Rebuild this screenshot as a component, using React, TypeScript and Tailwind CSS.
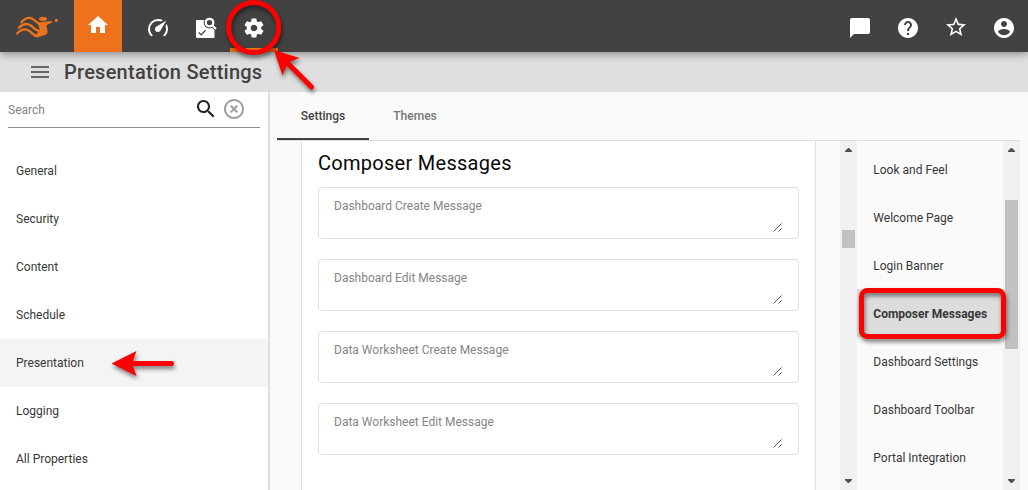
import React from "react";

function Icon({ d, className }: { d: string; className?: string }) {
  return (
    <svg viewBox="0 0 24 24" className={className ?? "size-6"} fill="currentColor" aria-hidden="true">
      <path d={d} />
    </svg>
  );
}

const icons = {
  home: "M10 20v-6h4v6h5v-8h3L12 3 2 12h3v8z",
  gauge:
    "M12,16A3,3 0 0,1 9,13C9,11.88 9.61,10.9 10.5,10.39L20.21,4.77L14.68,14.35C14.18,15.33 13.17,16 12,16M12,3C13.81,3 15.5,3.5 16.97,4.32L14.87,5.53C14,5.19 13,5 12,5A8,8 0 0,0 4,13C4,15.21 4.89,17.21 6.34,18.65H6.35C6.74,19.04 6.74,19.67 6.35,20.06C5.96,20.45 5.32,20.45 4.93,20.07V20.07C3.12,18.26 2,15.76 2,13A10,10 0 0,1 12,3M22,13C22,15.76 20.88,18.26 19.07,20.07V20.07C18.68,20.45 18.05,20.45 17.66,20.06C17.27,19.67 17.27,19.04 17.66,18.65V18.65C19.11,17.2 20,15.21 20,13C20,12 19.81,11 19.46,10.1L20.67,8C21.5,9.5 22,11.18 22,13Z",
  gear:
    "M19.14 12.94c.04-.3.06-.61.06-.94 0-.32-.02-.64-.07-.94l2.03-1.58c.18-.14.23-.41.12-.61l-1.92-3.32c-.12-.22-.37-.29-.59-.22l-2.39.96c-.5-.38-1.03-.7-1.62-.94l-.36-2.54c-.04-.24-.24-.41-.48-.41h-3.84c-.24 0-.43.17-.47.41l-.36 2.54c-.59.24-1.13.57-1.62.94l-2.39-.96c-.22-.08-.47 0-.59.22L2.74 8.87c-.12.21-.08.47.12.61l2.03 1.58c-.05.3-.09.63-.09.94s.02.64.07.94l-2.03 1.58c-.18.14-.23.41-.12.61l1.92 3.32c.12.22.37.29.59.22l2.39-.96c.5.38 1.03.7 1.62.94l.36 2.54c.05.24.24.41.48.41h3.84c.24 0 .44-.17.47-.41l.36-2.54c.59-.24 1.13-.56 1.62-.94l2.39.96c.22.08.47 0 .59-.22l1.92-3.32c.12-.22.07-.47-.12-.61l-2.01-1.58zM12 15.3c-1.82 0-3.3-1.48-3.3-3.3s1.48-3.3 3.3-3.3 3.3 1.48 3.3 3.3-1.48 3.3-3.3 3.3z",
  chat: "M20 2H4c-1.1 0-1.99.9-1.99 2L2 22l4-4h14c1.1 0 2-.9 2-2V4c0-1.1-.9-2-2-2z",
  help: "M12 2C6.48 2 2 6.48 2 12s4.48 10 10 10 10-4.48 10-10S17.52 2 12 2zm1 17h-2v-2h2v2zm2.07-7.75l-.9.92C13.45 12.9 13 13.5 13 15h-2v-.5c0-1.1.45-2.1 1.17-2.83l1.24-1.26c.37-.36.59-.86.59-1.41 0-1.1-.9-2-2-2s-2 .9-2 2H8c0-2.21 1.79-4 4-4s4 1.79 4 4c0 .88-.36 1.68-.93 2.25z",
  star: "M22 9.24l-7.19-.62L12 2 9.19 8.63 2 9.24l5.46 4.73L5.82 21 12 17.27 18.18 21l-1.63-7.03L22 9.24zM12 15.4l-3.76 2.27 1-4.28-3.32-2.88 4.38-.38L12 6.1l1.71 4.04 4.38.38-3.32 2.88 1 4.28L12 15.4z",
  account:
    "M12 2C6.48 2 2 6.48 2 12s4.48 10 10 10 10-4.48 10-10S17.52 2 12 2zm0 3c1.66 0 3 1.34 3 3s-1.34 3-3 3-3-1.34-3-3 1.34-3 3-3zm0 14.2c-2.5 0-4.71-1.28-6-3.22.03-1.99 4-3.08 6-3.08 1.99 0 5.97 1.09 6 3.08-1.29 1.94-3.5 3.22-6 3.22z",
  search:
    "M15.5 14h-.79l-.28-.27C15.41 12.59 16 11.11 16 9.5 16 5.91 13.09 3 9.5 3S3 5.91 3 9.5 5.91 16 9.5 16c1.61 0 3.09-.59 4.23-1.57l.27.28v.79l5 4.99L20.49 19l-4.99-5zm-6 0C7.01 14 5 11.99 5 9.5S7.01 5 9.5 5 14 7.01 14 9.5 11.99 14 9.5 14z",
  clear:
    "M12,20C7.59,20 4,16.41 4,12C4,7.59 7.59,4 12,4C16.41,4 20,7.59 20,12C20,16.41 16.41,20 12,20M12,2C6.47,2 2,6.47 2,12C2,17.53 6.47,22 12,22C17.53,22 22,17.53 22,12C22,6.47 17.53,2 12,2M14.59,8L12,10.59L9.41,8L8,9.41L10.59,12L8,14.59L9.41,16L12,13.41L14.59,16L16,14.59L13.41,12L16,9.41L14.59,8Z",
  menu: "M3 18h18v-2H3v2zm0-5h18v-2H3v2zm0-7v2h18V6H3z",
};

function Logo() {
  return (
    <svg viewBox="45 42 135 78" className="mt-[14px] ml-[15px] h-[26px] w-[45px]" fill="#ee711c" aria-hidden="true">
      <path d="M112 68L128 66L155 63C157 64 157 66 154 68L141 75C137 81 145 90 142 100C139 106 128 106 120 110C112 114 103 112 98 106L108 104L113 98L119 92L117 80Z" />
      <g fill="none" stroke="#ee711c" strokeLinecap="round" strokeWidth="7">
        <path d="M64 67C76 54 88 51 97 56C107 62 108 69 122 71" />
        <path d="M57 83C70 70 82 70 91 76C102 83 105 90 119 94" />
        <path d="M51 100C65 87 78 86 87 92C96 99 100 107 112 108" />
      </g>
      <ellipse cx="129" cy="56.500" rx="12" ry="6.500" />
      <circle cx="169" cy="61" r="5" />
    </svg>
  );
}

function AuditIcon() {
  return (
    <svg viewBox="0 0 24 24" className="size-6" fill="none" aria-hidden="true">
      <path d="M3 4h17.500v17a1 1 0 0 1-1 1H3a1 1 0 0 1-1-1V5a1 1 0 0 1 1-1z" fill="#fff" />
      <circle cx="15.500" cy="6.600" r="5.900" fill="#424242" />
      <path d="M17.500 8.500l5 5" stroke="#424242" strokeWidth="3.500" />
      <path d="M17 0h7v9l-3 2z" fill="#424242" />
      <circle cx="15.500" cy="6.600" r="3.800" stroke="#fff" strokeWidth="2.300" />
      <path d="M18 9l4 4" stroke="#fff" strokeWidth="2" />
      <path d="M4.800 16.500l2.400 2.400 4.300-4.600" stroke="#424242" strokeWidth="1.300" />
    </svg>
  );
}

function NavButton({ children, className = "" }: { children: React.ReactNode; className?: string }) {
  return <button className={`flex h-[52px] w-12 shrink-0 items-center justify-center pt-1 text-white ${className}`}>{children}</button>;
}

function TopBar() {
  return (
    <header className="relative z-10 flex h-[52px] shrink-0 bg-[#424242] shadow-[0_2px_8px_0px_rgba(0,0,0,0.38)]">
      <div className="w-[74px] shrink-0">
        <Logo />
      </div>
      <NavButton className="bg-[#ee711c] pb-1.5">
        <Icon d={icons.home} />
      </NavButton>
      <nav className="ml-3 flex flex-1">
        <NavButton><Icon d={icons.gauge} /></NavButton>
        <NavButton><AuditIcon /></NavButton>
        <NavButton className="border-b-4 border-[#ee711c] pt-2"><Icon d={icons.gear} /></NavButton>
      </nav>
      <div className="flex">
        <NavButton><Icon d={icons.chat} /></NavButton>
        <NavButton><Icon d={icons.help} /></NavButton>
        <NavButton className="pb-0.5"><Icon d={icons.star} /></NavButton>
        <NavButton><Icon d={icons.account} /></NavButton>
      </div>
    </header>
  );
}

const pages = ["General", "Security", "Content", "Schedule", "Presentation", "Logging", "All Properties"];
const fields = ["Dashboard Create Message", "Dashboard Edit Message", "Data Worksheet Create Message", "Data Worksheet Edit Message"];
const sections = ["Look and Feel", "Welcome Page", "Login Banner", "Composer Messages", "Dashboard Settings", "Dashboard Toolbar", "Portal Integration"];

function Sidebar() {
  return (
    <aside className="w-[270px] shrink-0 border-r-2 border-[#e0e0e0] bg-white">
      <div className="mx-2 flex h-9 items-center border-b border-[#8b8b8b] text-xs text-[#858585]">
        <span className="flex-1">Search</span>
        <Icon d={icons.search} className="mt-[-2px] mr-1 size-6 text-[#212121]" />
        <Icon d={icons.clear} className="mt-[-2px] mr-[14px] size-6 text-[#9e9e9e]" />
      </div>
      <ul className="mt-[19px]">
        {pages.map((page) => (
          <li key={page} className={`flex h-12 items-center pl-4 text-xs text-[#383838] ${page === "Presentation" ? "bg-[#f4f4f4]" : ""}`}>
            {page}
          </li>
        ))}
      </ul>
    </aside>
  );
}

function Scrollbar({ thumb }: { thumb: string }) {
  return (
    <div className="flex w-[17px] shrink-0 flex-col items-center bg-[#f1f1f1]">
      <svg viewBox="0 0 7 4" className="mt-[7px] h-1 w-[7px] shrink-0" fill="#505050" aria-hidden="true"><path d="M3 0h1l3 3v1H0V3z" /></svg>
      <div className={`w-[13px] shrink-0 bg-[#c1c1c1] ${thumb}`} />
      <svg viewBox="0 0 7 4" className="mt-auto mb-[7px] h-1 w-[7px] shrink-0" fill="#505050" aria-hidden="true"><path d="M0 0h7v1L4 4H3L0 1z" /></svg>
    </div>
  );
}

function MessageField({ label }: { label: string }) {
  return (
    <div className="flex h-[52px] justify-between rounded border border-[#e0e0e0] bg-white pt-[10px] pr-4 pl-[15px]">
      <span className="text-xs leading-4 text-[#858585]">{label}</span>
      <svg viewBox="0 0 9 9" className="mt-[25px] size-[9px]" stroke="#555" strokeWidth="1" fill="none" aria-hidden="true">
        <path d="M.5 8.5l8-8M5.5 8.5l3-3" />
      </svg>
    </div>
  );
}

function Annotations() {
  return (
    <svg viewBox="0 0 1028 490" className="pointer-events-none absolute inset-0 z-20 h-[490px] w-[1028px] drop-shadow-[1px_3px_2px_rgba(0,0,0,0.5)]" fill="none" aria-hidden="true">
      <circle cx="253.7" cy="27.5" r="25" stroke="#fe0000" strokeWidth="5" />
      <path d="M311.5 87L286 61.5" stroke="#fe0000" strokeWidth="5" strokeLinecap="round" />
      <path d="M274 50L299.500 58L288 62.500L282.500 75.500Z" fill="#fe0000" />
      <path d="M171.500 363.500H134" stroke="#fe0000" strokeWidth="5" strokeLinecap="round" />
      <path d="M111.500 363.500L136.500 351L132 363.500L136.500 376Z" fill="#fe0000" />
      <rect x="861.500" y="290.500" width="142" height="46" rx="6" stroke="#fe0000" strokeWidth="5" />
    </svg>
  );
}

export default function App() {
  return (
    <div className="relative flex h-[490px] w-[1028px] flex-col overflow-hidden bg-[#fafafa] font-['Roboto',sans-serif]">
      <TopBar />
      <div className="flex h-10 shrink-0 items-center bg-[#dfdfdf] pl-7 text-[#424242]">
        <Icon d={icons.menu} className="size-6 text-[#666]" />
        <h1 className="ml-3 text-xl font-medium tracking-[0.25px]">Presentation Settings</h1>
      </div>
      <div className="flex min-h-0 flex-1">
        <Sidebar />
        <main className="mr-2 ml-[7px] flex min-w-0 flex-1 flex-col">
          <div className="flex h-[49px] shrink-0 border-b border-[#dcdcdc] text-xs font-medium">
            <div className="flex w-[92px] items-center justify-center border-b-2 border-[#424242] pt-0.5 text-[#424242]">Settings</div>
            <div className="flex w-[92px] items-center justify-center border-b-2 border-transparent pt-0.5 text-[#777]">Themes</div>
          </div>
          <div className="flex min-h-0 flex-1">
            <section className="ml-6 w-[515px] shrink-0 border-x border-[#e0e0e0] bg-white px-4 pt-2">
              <h2 className="text-xl leading-7 font-normal tracking-[0.28px] text-[#080808]">Composer Messages</h2>
              <div className="mt-[10px] flex flex-col gap-5">
                {fields.map((label) => <MessageField key={label} label={label} />)}
              </div>
            </section>
            <div className="ml-6 flex">
              <Scrollbar thumb="mt-[78px] h-[18px]" />
            </div>
            <ul className="min-w-0 flex-1 pt-1">
              {sections.map((section) => (
                <li key={section} className={`flex h-12 items-center pt-0.5 pl-[16.3px] text-xs text-[#383838] ${section === "Composer Messages" ? "bg-[#dcdcdc] font-bold" : ""}`}>
                  {section}
                </li>
              ))}
            </ul>
            <Scrollbar thumb="mt-12 h-[149px]" />
          </div>
        </main>
      </div>
      <Annotations />
    </div>
  );
}
